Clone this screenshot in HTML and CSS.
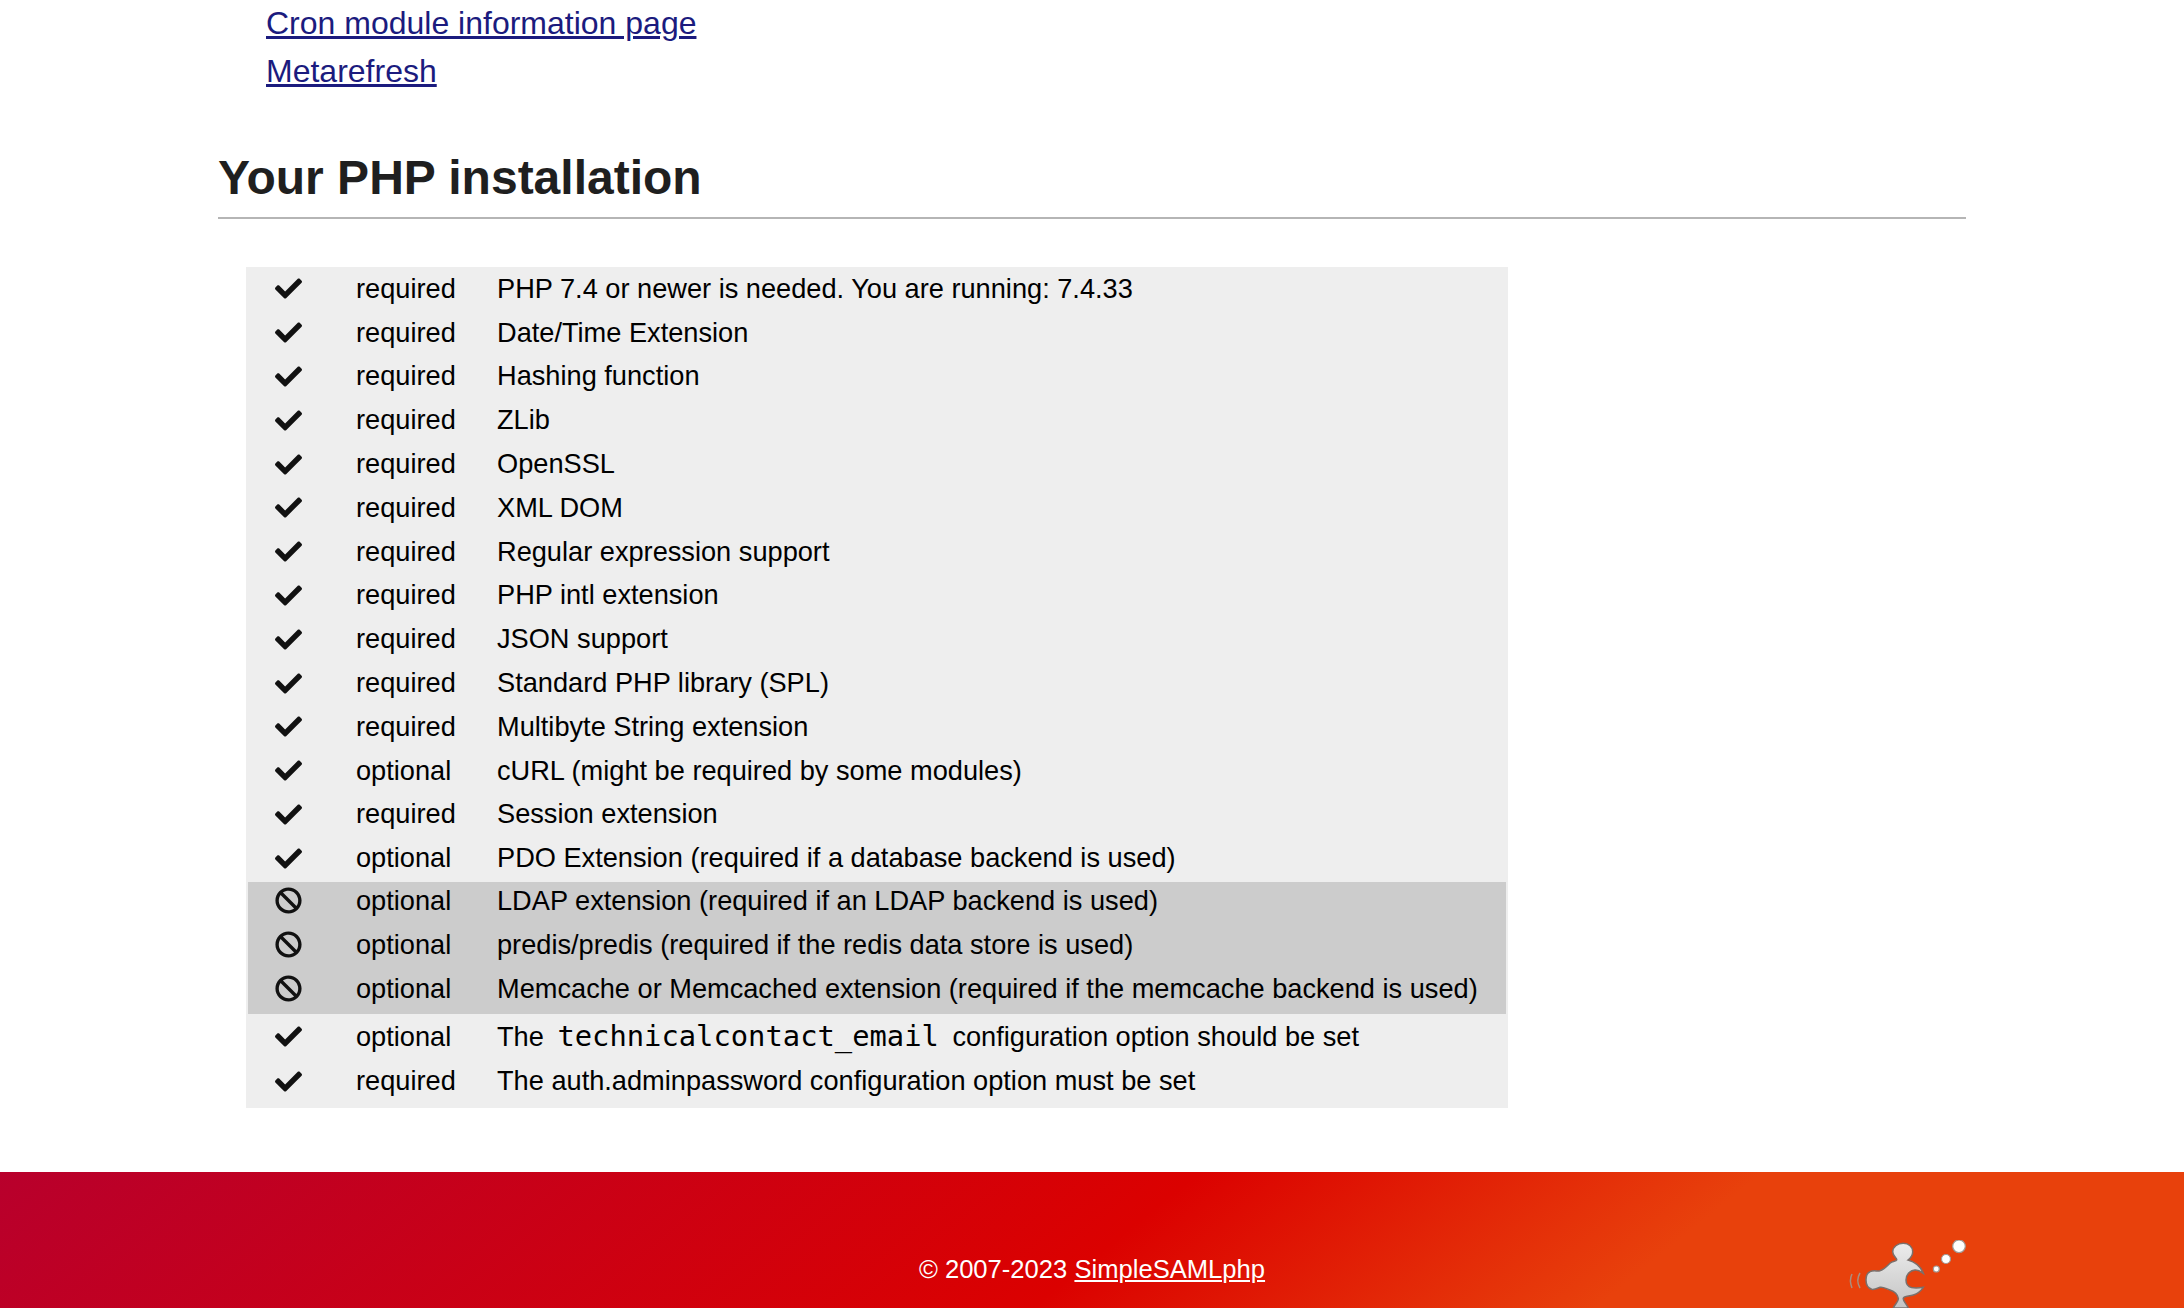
FILE: index.html
```html
<!DOCTYPE html>
<html lang="en">
<head>
<meta charset="utf-8">
<title>Your PHP installation</title>
<link rel="stylesheet" href="styles.css">
</head>
<body>
<svg class="sprite" aria-hidden="true">
  <symbol id="check" viewBox="0 0 512 512"><path d="M173.898 439.404l-166.4-166.4c-9.997-9.997-9.997-26.206 0-36.204l36.203-36.204c9.997-9.998 26.207-9.998 36.204 0L192 312.69 432.095 72.596c9.997-9.997 26.207-9.997 36.204 0l36.203 36.204c9.997 9.997 9.997 26.206 0 36.204l-294.4 294.401c-9.998 9.997-26.207 9.997-36.204-.001z"/></symbol>
  <symbol id="ban" viewBox="0 0 512 512"><path d="M256 8C119.034 8 8 119.033 8 256s111.034 248 248 248 248-111.034 248-248S392.967 8 256 8zm130.108 117.892c65.448 65.448 70 165.481 20.677 235.637L150.47 105.216c70.204-49.356 170.226-44.735 235.638 20.676zM125.892 386.108c-65.448-65.448-70-165.481-20.677-235.637L361.53 406.784c-70.203 49.356-170.226 44.736-235.638-20.676z"/></symbol>
</svg>
<main class="content">
  <ul class="links">
    <li><a href="#">Cron module information page</a></li>
    <li><a href="#">Metarefresh</a></li>
  </ul>
  <h2 class="title">Your PHP installation</h2>
  <div class="checks">
    <div class="row"><svg class="icon"><use href="#check"/></svg><span class="level">required</span><span>PHP 7.4 or newer is needed. You are running: 7.4.33</span></div>
    <div class="row"><svg class="icon"><use href="#check"/></svg><span class="level">required</span><span>Date/Time Extension</span></div>
    <div class="row"><svg class="icon"><use href="#check"/></svg><span class="level">required</span><span>Hashing function</span></div>
    <div class="row"><svg class="icon"><use href="#check"/></svg><span class="level">required</span><span>ZLib</span></div>
    <div class="row"><svg class="icon"><use href="#check"/></svg><span class="level">required</span><span>OpenSSL</span></div>
    <div class="row"><svg class="icon"><use href="#check"/></svg><span class="level">required</span><span>XML DOM</span></div>
    <div class="row"><svg class="icon"><use href="#check"/></svg><span class="level">required</span><span>Regular expression support</span></div>
    <div class="row"><svg class="icon"><use href="#check"/></svg><span class="level">required</span><span>PHP intl extension</span></div>
    <div class="row"><svg class="icon"><use href="#check"/></svg><span class="level">required</span><span>JSON support</span></div>
    <div class="row"><svg class="icon"><use href="#check"/></svg><span class="level">required</span><span>Standard PHP library (SPL)</span></div>
    <div class="row"><svg class="icon"><use href="#check"/></svg><span class="level">required</span><span>Multibyte String extension</span></div>
    <div class="row"><svg class="icon"><use href="#check"/></svg><span class="level">optional</span><span>cURL (might be required by some modules)</span></div>
    <div class="row"><svg class="icon"><use href="#check"/></svg><span class="level">required</span><span>Session extension</span></div>
    <div class="row"><svg class="icon"><use href="#check"/></svg><span class="level">optional</span><span>PDO Extension (required if a database backend is used)</span></div>
    <div class="row missing"><svg class="icon"><use href="#ban"/></svg><span class="level">optional</span><span>LDAP extension (required if an LDAP backend is used)</span></div>
    <div class="row missing"><svg class="icon"><use href="#ban"/></svg><span class="level">optional</span><span>predis/predis (required if the redis data store is used)</span></div>
    <div class="row missing"><svg class="icon"><use href="#ban"/></svg><span class="level">optional</span><span>Memcache or Memcached extension (required if the memcache backend is used)</span></div>
    <div class="row tall"><svg class="icon"><use href="#check"/></svg><span class="level">optional</span><span>The <code>technicalcontact_email</code> configuration option should be set</span></div>
    <div class="row last"><svg class="icon"><use href="#check"/></svg><span class="level">required</span><span>The auth.adminpassword configuration option must be set</span></div>
  </div>
</main>
<footer class="footer">
  <p class="copyright">© 2007-2023 <a href="#">SimpleSAMLphp</a></p>
  <svg class="logo" viewBox="0 0 130 68" aria-hidden="true">
    <defs><linearGradient id="body" x1="0" y1="0" x2="0" y2="1"><stop offset="0" stop-color="#ececec"/><stop offset="1" stop-color="#c4c4c4"/></linearGradient></defs>
    <path class="wave" d="M12 34c-2 4-2 9 0 14M20 33c-3 5-3 10 0 15"/>
    <path class="bird" d="M63.3 3.3C69 3.300 72.700 7 72.700 11.700 72.700 15.500 70.500 18 68 20 75 22 81 27 83.300 33.300 80.500 31 78 29.800 75 30 69.500 30.500 66 35 66 40 66 44 68 46.700 71.500 47.500 75.500 48.300 80 47.800 83.300 47.300 80.500 51.500 77 53.800 73.300 55 69 56.500 64 56 63.300 58.300 62.800 61 66.500 64 68.300 68L53.300 68C55 64 58.800 61.500 58.300 58.300 57.500 54 54.500 51.500 50 50 46 48.700 43 46.500 40 47.300 37 48.500 34 50 31.700 49.300 28 48 26 44.500 26 40 26 35.500 28 32.500 30 31.700 33.500 30 37 31.500 40 30.700 44 29.500 47 26 50 23.300 52.500 21 56 21.500 56.700 20 57.500 18.200 52.700 16.500 52.700 11.700 52.700 7 57.500 3.300 63.300 3.300Z"/>
    <circle class="bubble" cx="96.300" cy="29" r="3"/>
    <circle class="bubble" cx="106" cy="19" r="4.500"/>
    <circle class="bubble" cx="119" cy="6.300" r="6.300"/>
  </svg>
</footer>
</body>
</html>
```
FILE: styles.css
```css
html, body {
  margin: 0;
  padding: 0;
  height: 1308px;
  overflow: hidden;
  background: #fff;
}
body {
  font-family: "Liberation Sans", Arial, sans-serif;
  color: #000;
}
.sprite {
  display: none;
}
.content {
  width: 1748px;
  margin: 0 auto;
  height: 1173px;
}
.links {
  list-style: none;
  margin: -1px 0 0;
  padding: 0 0 0 48px;
  font-size: 32px;
  line-height: 48px;
}
.links a {
  color: #1b1b7e;
}
.title {
  margin: 51px 0 0;
  padding-bottom: 7px;
  height: 64px;
  border-bottom: 2px solid #b5b5b5;
  font-size: 48px;
  line-height: 64px;
  font-weight: 700;
  color: #1f1f1f;
}
.checks {
  box-sizing: border-box;
  width: 1262px;
  margin: 48px 0 0 28px;
  padding: 1.5px 2px 4.3px;
  background: #eee;
  font-size: 27.2px;
}
.row {
  box-sizing: border-box;
  display: grid;
  grid-template-columns: 108px 141px 1fr;
  align-items: center;
  height: 43.8px;
  padding-bottom: 3px;
  line-height: 32px;
}
.row.missing {
  background: #ccc;
  height: 44px;
  padding-bottom: 6px;
}
.row.tall {
  height: 46px;
  padding-bottom: 0;
}
.row.last {
  padding-bottom: 1px;
}
.icon {
  width: 27px;
  height: 27px;
  margin-left: 27px;
  fill: #111;
}
code {
  padding: 0 6px 0 6px;
  font-family: "DejaVu Sans Mono", monospace;
  font-size: 28.8px;
}
.footer {
  position: relative;
  height: 136px;
  overflow: hidden;
  background: linear-gradient(141deg, #b8002c 0%, #db0100 51%, #e8410c 75%);
  color: #fff;
}
.copyright {
  margin: 0;
  padding-top: 81px;
  text-align: center;
  font-size: 25.6px;
  line-height: 32px;
}
.copyright a {
  color: #fff;
}
.logo {
  position: absolute;
  left: 1840px;
  top: 68px;
  width: 130px;
  height: 68px;
}
.wave {
  fill: none;
  stroke: #a88f7f;
  stroke-width: 1.5;
}
.bird {
  fill: url(#body);
  stroke: #7a706c;
  stroke-width: 1.5;
}
.bubble {
  fill: #fff;
  stroke: #a09a96;
  stroke-width: 1.2;
}
```
